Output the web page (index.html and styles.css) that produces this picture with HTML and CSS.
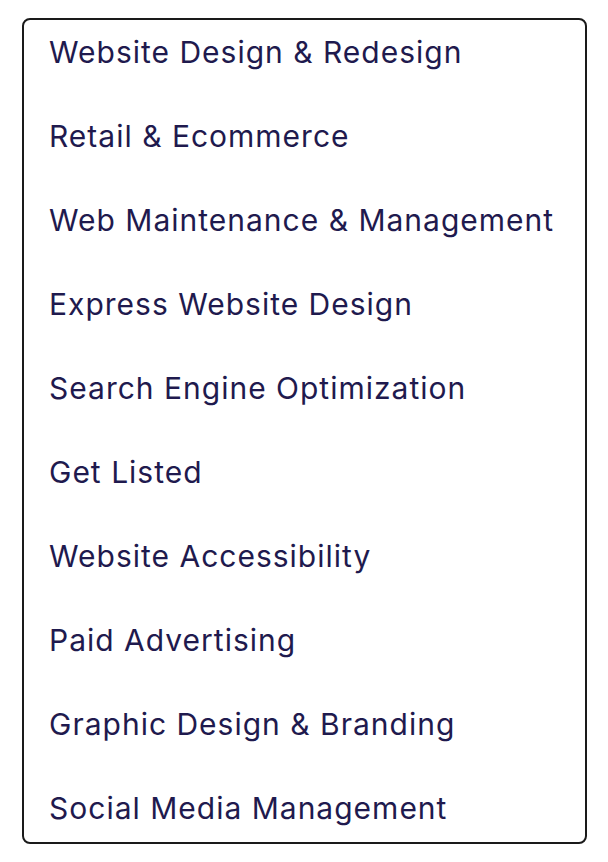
FILE: index.html
```html
<!DOCTYPE html>
<html>
<head>
<meta charset="utf-8">
<link rel="stylesheet" href="styles.css">
</head>
<body>
<nav class="menu">
  <a class="item" href="#">Website Design &amp; Redesign</a>
  <a class="item" href="#">Retail &amp; Ecommerce</a>
  <a class="item" href="#">Web Maintenance &amp; Management</a>
  <a class="item" href="#">Express Website Design</a>
  <a class="item" href="#">Search Engine Optimization</a>
  <a class="item" href="#">Get Listed</a>
  <a class="item" href="#">Website Accessibility</a>
  <a class="item" href="#">Paid Advertising</a>
  <a class="item" href="#">Graphic Design &amp; Branding</a>
  <a class="item" href="#">Social Media Management</a>
</nav>
</body>
</html>
```
FILE: styles.css
```css
html, body {
  margin: 0;
  padding: 0;
  background: #ffffff;
}
body {
  padding: 18px 0 0 22px;
}
.menu {
  box-sizing: border-box;
  width: 565px;
  height: 826px;
  border: 2px solid #1a1a1a;
  border-radius: 8px;
  padding: 12px 0 14px 25px;
  display: flex;
  flex-direction: column;
  gap: 44px;
  font-family: Inter, "Noto Sans", sans-serif;
}
.item {
  display: block;
  line-height: 40px;
  font-size: 30px;
  font-weight: 400;
  letter-spacing: 1px;
  color: #1f1a4e;
  text-decoration: none;
  white-space: nowrap;
}
```
